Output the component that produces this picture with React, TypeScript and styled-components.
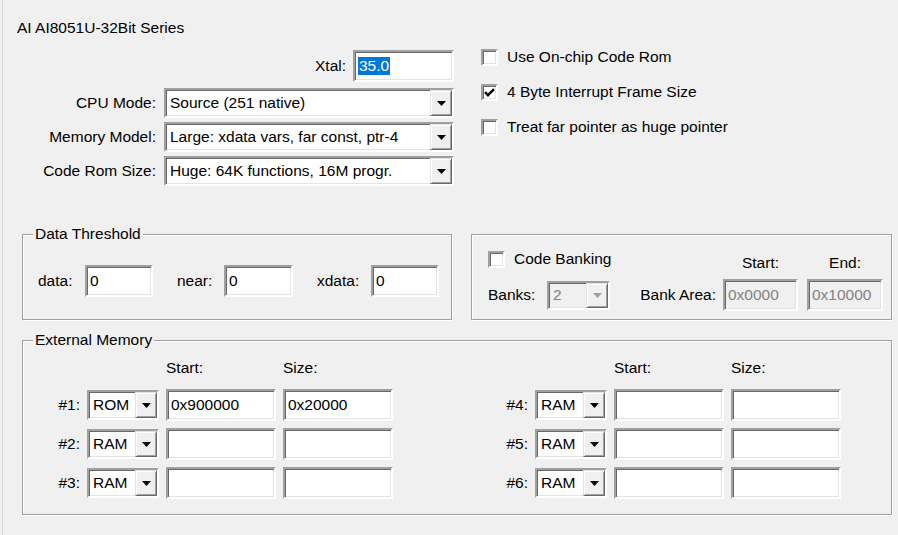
import React from "react";
import styled, { createGlobalStyle } from "styled-components";

const GlobalStyle = createGlobalStyle`
  html, body { margin: 0; padding: 0; background: #f0f0f0; }
  body {
    font-family: "Liberation Sans", Arial, sans-serif;
    font-size: 15.5px;
    color: #000;
  }
  * { box-sizing: border-box; }
`;

const Window = styled.div`
  width: 896px;
  height: 535px;
  margin-left: 2px;
  border-left: 1px solid #dadada;
  padding: 19px 6px 0 14px;
  display: flex;
  flex-direction: column;
  overflow: hidden;
`;

const Title = styled.div`
  line-height: 18px;
  height: 18px;
  white-space: nowrap;
`;

const TopRow = styled.div`
  display: flex;
  gap: 27px;
  margin-top: 11px;
`;

const LeftCol = styled.div`
  width: 437px;
  display: flex;
  flex-direction: column;
  padding-top: 2px;
`;

const FormRow = styled.div<{ $mt?: number; $gap?: number }>`
  display: flex;
  justify-content: flex-end;
  align-items: center;
  gap: ${(p) => p.$gap ?? 8}px;
  margin-top: ${(p) => p.$mt ?? 0}px;
`;

const Text = styled.span<{ $disabled?: boolean }>`
  line-height: 18px;
  white-space: nowrap;
  color: ${(p) => (p.$disabled ? "#838383" : "#000")};
`;

const sunken = `
  border: 2px solid;
  border-color: #a0a0a0 #ffffff #ffffff #a0a0a0;
  box-shadow: inset 1px 1px 0 #696969, inset -1px -1px 0 #e3e3e3;
`;

const TextBox = styled.div<{ $w: number; $h?: number; $disabled?: boolean }>`
  width: ${(p) => p.$w}px;
  height: ${(p) => p.$h ?? 32}px;
  display: flex;
  align-items: center;
  padding: 0 3px 1px 3px;
  background: ${(p) => (p.$disabled ? "#f0f0f0" : "#ffffff")};
  color: ${(p) => (p.$disabled ? "#838383" : "#000")};
  ${sunken}
  white-space: nowrap;
  overflow: hidden;
  line-height: 18px;
  flex: none;
`;

const Highlight = styled.span`
  background: #0078d7;
  color: #ffffff;
  line-height: 18px;
  padding: 0 1px;
`;

const Combo = styled.div<{ $w: number; $h?: number; $disabled?: boolean }>`
  width: ${(p) => p.$w}px;
  height: ${(p) => p.$h ?? 30}px;
  display: flex;
  background: ${(p) => (p.$disabled ? "#f0f0f0" : "#ffffff")};
  color: ${(p) => (p.$disabled ? "#838383" : "#000")};
  ${sunken}
  flex: none;
`;

const ComboText = styled.div`
  flex: 1;
  min-width: 0;
  padding-left: 4px;
  display: flex;
  align-items: center;
  white-space: nowrap;
  overflow: hidden;
  line-height: 18px;
`;

const ComboButton = styled.div`
  width: 22px;
  flex: none;
  background: #f0f0f0;
  border: 1px solid;
  border-color: #e3e3e3 #696969 #696969 #e3e3e3;
  box-shadow: inset 1px 1px 0 #ffffff, inset -1px -1px 0 #a0a0a0;
  display: flex;
  align-items: center;
  justify-content: center;
  padding-top: 1px;
`;

const Arrow = ({ disabled }: { disabled?: boolean }) => (
  <svg width="9" height="5" viewBox="0 0 9 5">
    <polygon points="0,0 9,0 4.5,5" fill={disabled ? "#a0a0a0" : "#000"} />
  </svg>
);

const Select = ({
  value,
  w,
  h,
  disabled,
}: {
  value: string;
  w: number;
  h?: number;
  disabled?: boolean;
}) => (
  <Combo $w={w} $h={h} $disabled={disabled}>
    <ComboText>{value}</ComboText>
    <ComboButton>
      <Arrow disabled={disabled} />
    </ComboButton>
  </Combo>
);

const RightCol = styled.div`
  display: flex;
  flex-direction: column;
  gap: 17px;
`;

const CheckRow = styled.div`
  display: flex;
  align-items: center;
  gap: 9px;
  height: 18px;
`;

const CheckBox = styled.span`
  width: 17px;
  height: 17px;
  flex: none;
  background: #ffffff;
  ${sunken}
  display: flex;
  align-items: center;
  justify-content: center;
`;

const Check = ({ label, checked }: { label: string; checked?: boolean }) => (
  <CheckRow>
    <CheckBox>
      {checked && (
        <svg width="11" height="9" viewBox="0 0 11 9">
          <polyline
            points="1,4.2 4,7.2 10,1.2"
            fill="none"
            stroke="#000"
            strokeWidth="2.4"
          />
        </svg>
      )}
    </CheckBox>
    <Text>{label}</Text>
  </CheckRow>
);

const BoxesRow = styled.div`
  display: flex;
  gap: 19px;
  margin: 48px 0 0 5px;
`;

const GroupBox = styled.div`
  border: 1px solid #a0a0a0;
  box-shadow: inset 1px 1px 0 #ffffff, 1px 1px 0 #ffffff;
`;

const Legend = styled.div`
  width: fit-content;
  margin: -10px 0 0 10px;
  padding: 0 2px;
  background: #f0f0f0;
  line-height: 18px;
  white-space: nowrap;
`;

const DataBox = styled(GroupBox)`
  width: 430px;
  height: 86px;
`;

const FieldsRow = styled.div`
  display: flex;
  gap: 24px;
  margin-top: 22px;
  padding-left: 15px;
`;

const Field = styled.div`
  display: flex;
  align-items: center;
`;

const FieldLabel = styled.span<{ $w: number }>`
  width: ${(p) => p.$w}px;
  line-height: 18px;
  white-space: nowrap;
`;

const BankBox = styled(GroupBox)`
  flex: 1;
  height: 86px;
  display: grid;
  grid-template-columns: 59px 63px 113px 84px 76px;
  grid-template-rows: 32px 32px;
  padding: 12px 8px 8px 16px;
`;

const BankCheck = styled.div`
  grid-column: 1 / 4;
  align-self: start;
  margin-top: 3px;
`;

const ColHead = styled.span<{ $w: number }>`
  width: ${(p) => p.$w}px;
  text-align: center;
  align-self: end;
  margin-bottom: 7px;
  line-height: 18px;
`;

const CellLabel = styled.span<{ $right?: boolean }>`
  align-self: center;
  line-height: 18px;
  white-space: nowrap;
  text-align: ${(p) => (p.$right ? "right" : "left")};
  padding-right: ${(p) => (p.$right ? 7 : 0)}px;
`;

const Cell = styled.div`
  align-self: center;
`;

const ExtBox = styled(GroupBox)`
  margin: 20px 0 0 5px;
  padding-bottom: 15px;
`;

const Halves = styled.div`
  display: flex;
  gap: 109px;
  margin-top: 10px;
  padding-left: 31px;
`;

const MemGrid = styled.div`
  display: grid;
  grid-template-columns: 26px 72px 110px 110px;
  grid-template-rows: 23px 32px 32px 32px;
  column-gap: 7px;
  row-gap: 7px;
  align-items: center;
`;

const HeadSpacer = styled.span`
  grid-column: 1 / 3;
  grid-row: 1 / 2;
`;

const MemHead = styled.span`
  align-self: start;
  line-height: 18px;
`;

const RowLabel = styled.span`
  text-align: right;
  line-height: 18px;
  white-space: nowrap;
`;

type MemRow = { n: number; type: string; start: string; size: string };

const leftRows: MemRow[] = [
  { n: 1, type: "ROM", start: "0x900000", size: "0x20000" },
  { n: 2, type: "RAM", start: "", size: "" },
  { n: 3, type: "RAM", start: "", size: "" },
];
const rightRows: MemRow[] = [
  { n: 4, type: "RAM", start: "", size: "" },
  { n: 5, type: "RAM", start: "", size: "" },
  { n: 6, type: "RAM", start: "", size: "" },
];

const MemHalf = ({ rows }: { rows: MemRow[] }) => (
  <MemGrid>
    <HeadSpacer />
    <MemHead>Start:</MemHead>
    <MemHead>Size:</MemHead>
    {rows.map((r) => (
      <React.Fragment key={r.n}>
        <RowLabel>#{r.n}:</RowLabel>
        <Select value={r.type} w={72} h={30} />
        <TextBox $w={110}>{r.start}</TextBox>
        <TextBox $w={110}>{r.size}</TextBox>
      </React.Fragment>
    ))}
  </MemGrid>
);

export default function App() {
  return (
    <>
      <GlobalStyle />
      <Window>
        <Title>AI AI8051U-32Bit Series</Title>
        <TopRow>
          <LeftCol>
            <FormRow $gap={7}>
              <Text>Xtal:</Text>
              <TextBox $w={101}>
                <Highlight>35.0</Highlight>
              </TextBox>
            </FormRow>
            <FormRow $mt={6}>
              <Text>CPU Mode:</Text>
              <Select value="Source (251 native)" w={290} />
            </FormRow>
            <FormRow $mt={4}>
              <Text>Memory Model:</Text>
              <Select value="Large: xdata vars, far const, ptr-4" w={290} />
            </FormRow>
            <FormRow $mt={4}>
              <Text>Code Rom Size:</Text>
              <Select value="Huge: 64K functions, 16M progr." w={290} />
            </FormRow>
          </LeftCol>
          <RightCol>
            <Check label="Use On-chip Code Rom" />
            <Check label="4 Byte Interrupt Frame Size" checked />
            <Check label="Treat far pointer as huge pointer" />
          </RightCol>
        </TopRow>

        <BoxesRow>
          <DataBox>
            <Legend>Data Threshold</Legend>
            <FieldsRow>
              <Field>
                <FieldLabel $w={47}>data:</FieldLabel>
                <TextBox $w={68}>0</TextBox>
              </Field>
              <Field>
                <FieldLabel $w={47}>near:</FieldLabel>
                <TextBox $w={69}>0</TextBox>
              </Field>
              <Field>
                <FieldLabel $w={54}>xdata:</FieldLabel>
                <TextBox $w={68}>0</TextBox>
              </Field>
            </FieldsRow>
          </DataBox>
          <BankBox>
            <BankCheck>
              <Check label="Code Banking" />
            </BankCheck>
            <ColHead $w={75}>Start:</ColHead>
            <ColHead $w={76}>End:</ColHead>
            <CellLabel>Banks:</CellLabel>
            <Cell>
              <Select value="2" w={63} h={29} disabled />
            </Cell>
            <CellLabel $right>Bank Area:</CellLabel>
            <Cell>
              <TextBox $w={75} $disabled>
                0x0000
              </TextBox>
            </Cell>
            <Cell>
              <TextBox $w={76} $disabled>
                0x10000
              </TextBox>
            </Cell>
          </BankBox>
        </BoxesRow>

        <ExtBox>
          <Legend>External Memory</Legend>
          <Halves>
            <MemHalf rows={leftRows} />
            <MemHalf rows={rightRows} />
          </Halves>
        </ExtBox>
      </Window>
    </>
  );
}
